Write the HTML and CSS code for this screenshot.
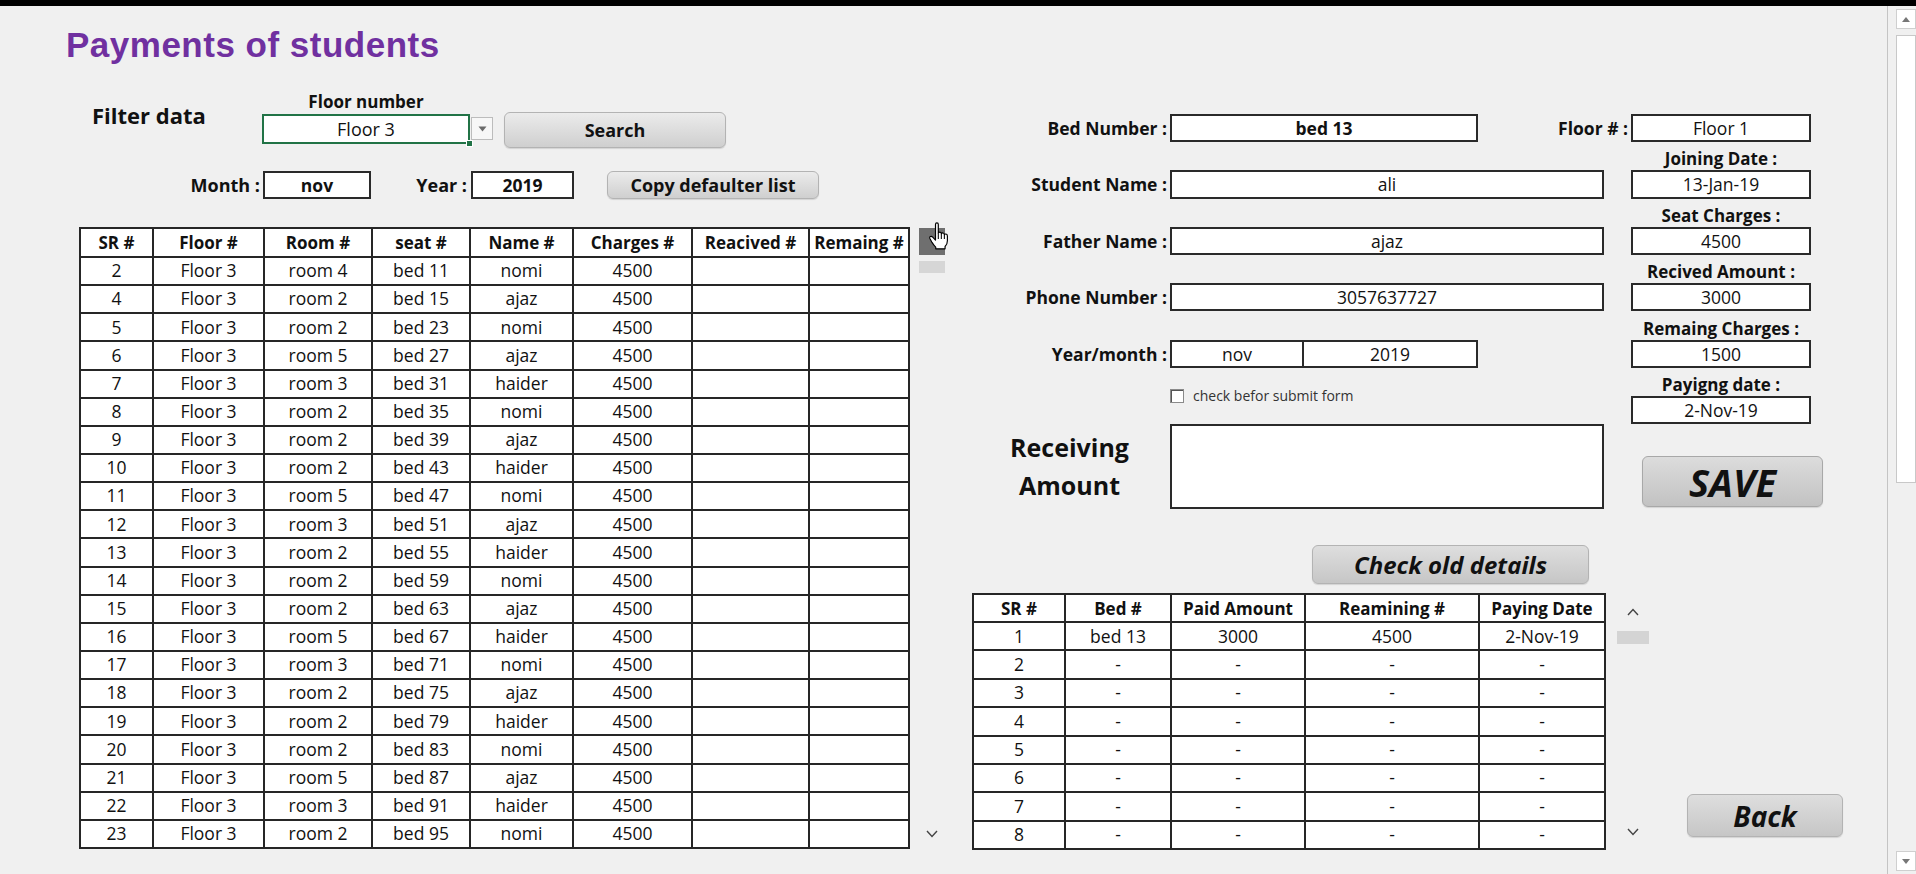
FILE: index.html
```html
<!DOCTYPE html>
<html lang="en">
<head>
<meta charset="utf-8">
<title>Payments of students</title>
<link rel="stylesheet" href="styles.css">
</head>
<body>
<div class="topbar"></div>
<div class="sheet">
  <section class="left">
    <h1 class="title">Payments of students</h1>

    <div class="filter-row">
      <div class="filter-title">Filter data</div>
      <div class="floor-group">
        <div class="floor-label">Floor number</div>
        <div class="floor-controls">
          <div class="select">Floor 3<span class="sel-handle"></span></div>
          <div class="drop-btn"><svg width="9" height="6" viewBox="0 0 9 6"><path d="M0.5 0.5 H8.5 L4.5 5.5 Z" fill="#6b6b6b"/></svg></div>
          <button class="btn btn-search">Search</button>
        </div>
      </div>
    </div>

    <div class="period-row">
      <div class="lbl lbl-month">Month :</div>
      <div class="box box-month">nov</div>
      <div class="lbl lbl-year">Year :</div>
      <div class="box box-year">2019</div>
      <button class="btn btn-copy">Copy defaulter list</button>
    </div>

    <div class="table-row">
      <table class="grid grid-main">
        <colgroup>
          <col class="c73"><col class="c111"><col class="c108"><col class="c98"><col class="c103"><col class="c119"><col class="c117"><col class="c100">
        </colgroup>
        <thead>
          <tr><th>SR #</th><th>Floor #</th><th>Room #</th><th>seat #</th><th>Name #</th><th>Charges #</th><th>Reacived #</th><th>Remaing #</th></tr>
        </thead>
        <tbody>
          <tr><td>2</td><td>Floor 3</td><td>room 4</td><td>bed 11</td><td>nomi</td><td>4500</td><td></td><td></td></tr>
          <tr><td>4</td><td>Floor 3</td><td>room 2</td><td>bed 15</td><td>ajaz</td><td>4500</td><td></td><td></td></tr>
          <tr><td>5</td><td>Floor 3</td><td>room 2</td><td>bed 23</td><td>nomi</td><td>4500</td><td></td><td></td></tr>
          <tr><td>6</td><td>Floor 3</td><td>room 5</td><td>bed 27</td><td>ajaz</td><td>4500</td><td></td><td></td></tr>
          <tr><td>7</td><td>Floor 3</td><td>room 3</td><td>bed 31</td><td>haider</td><td>4500</td><td></td><td></td></tr>
          <tr><td>8</td><td>Floor 3</td><td>room 2</td><td>bed 35</td><td>nomi</td><td>4500</td><td></td><td></td></tr>
          <tr><td>9</td><td>Floor 3</td><td>room 2</td><td>bed 39</td><td>ajaz</td><td>4500</td><td></td><td></td></tr>
          <tr><td>10</td><td>Floor 3</td><td>room 2</td><td>bed 43</td><td>haider</td><td>4500</td><td></td><td></td></tr>
          <tr><td>11</td><td>Floor 3</td><td>room 5</td><td>bed 47</td><td>nomi</td><td>4500</td><td></td><td></td></tr>
          <tr><td>12</td><td>Floor 3</td><td>room 3</td><td>bed 51</td><td>ajaz</td><td>4500</td><td></td><td></td></tr>
          <tr><td>13</td><td>Floor 3</td><td>room 2</td><td>bed 55</td><td>haider</td><td>4500</td><td></td><td></td></tr>
          <tr><td>14</td><td>Floor 3</td><td>room 2</td><td>bed 59</td><td>nomi</td><td>4500</td><td></td><td></td></tr>
          <tr><td>15</td><td>Floor 3</td><td>room 2</td><td>bed 63</td><td>ajaz</td><td>4500</td><td></td><td></td></tr>
          <tr><td>16</td><td>Floor 3</td><td>room 5</td><td>bed 67</td><td>haider</td><td>4500</td><td></td><td></td></tr>
          <tr><td>17</td><td>Floor 3</td><td>room 3</td><td>bed 71</td><td>nomi</td><td>4500</td><td></td><td></td></tr>
          <tr><td>18</td><td>Floor 3</td><td>room 2</td><td>bed 75</td><td>ajaz</td><td>4500</td><td></td><td></td></tr>
          <tr><td>19</td><td>Floor 3</td><td>room 2</td><td>bed 79</td><td>haider</td><td>4500</td><td></td><td></td></tr>
          <tr><td>20</td><td>Floor 3</td><td>room 2</td><td>bed 83</td><td>nomi</td><td>4500</td><td></td><td></td></tr>
          <tr><td>21</td><td>Floor 3</td><td>room 5</td><td>bed 87</td><td>ajaz</td><td>4500</td><td></td><td></td></tr>
          <tr><td>22</td><td>Floor 3</td><td>room 3</td><td>bed 91</td><td>haider</td><td>4500</td><td></td><td></td></tr>
          <tr><td>23</td><td>Floor 3</td><td>room 2</td><td>bed 95</td><td>nomi</td><td>4500</td><td></td><td></td></tr>
        </tbody>
      </table>
      <div class="mini-scroll">
        <div class="ms-up"></div>
        <div class="ms-thumb"></div>
        <svg class="ms-down" width="12" height="8" viewBox="0 0 12 8"><path d="M1 1 L6 6.5 L11 1" fill="none" stroke="#444" stroke-width="1.4"/></svg>
        <svg class="cursor" width="22" height="28" viewBox="0 0 18 24">
          <path d="M6 2.2 Q6 0.8 7.2 0.8 Q8.4 0.8 8.4 2.2 V9.6 Q8.6 8.6 9.8 8.7 Q11 8.8 11 10.1 Q11.2 9.3 12.4 9.4 Q13.6 9.6 13.6 10.9 Q13.8 10.2 15 10.3 Q16.2 10.5 16.2 11.9 V16 Q16.2 19 14.2 21 V23 H6.2 V21.5 Q4.5 20 3 17.5 L1.2 14.2 Q0.6 13 1.6 12.5 Q2.6 12 3.6 13 L6 15.5 Z" fill="#fff" stroke="#000" stroke-width="1" stroke-linejoin="round"/>
          <path d="M8.4 9.6 V14.5 M11 10.1 V14.5 M13.6 10.9 V14.5" stroke="#000" stroke-width="0.9" fill="none"/>
        </svg>
      </div>
    </div>
  </section>

  <section class="right">
    <div class="form">
      <div class="f-lbl row1">Bed Number :</div>
      <div class="box f-bed row1">bed 13</div>
      <div class="f-lbl floor-lbl row1">Floor # :</div>
      <div class="box side-box row1">Floor 1</div>

      <div class="side-lbl row2">Joining Date :</div>

      <div class="f-lbl row3">Student Name :</div>
      <div class="box f-wide row3">ali</div>
      <div class="box side-box row3">13-Jan-19</div>

      <div class="side-lbl row4">Seat Charges :</div>

      <div class="f-lbl row5">Father Name :</div>
      <div class="box f-wide row5">ajaz</div>
      <div class="box side-box row5">4500</div>

      <div class="side-lbl row6">Recived Amount :</div>

      <div class="f-lbl row7">Phone Number :</div>
      <div class="box f-wide row7">3057637727</div>
      <div class="box side-box row7">3000</div>

      <div class="side-lbl row8">Remaing Charges :</div>

      <div class="f-lbl row9">Year/month :</div>
      <div class="ym row9"><span class="ym-m">nov</span><span class="ym-y">2019</span></div>
      <div class="box side-box row9">1500</div>

      <div class="side-lbl row10">Payigng date :</div>
      <label class="check"><span class="check-box"></span>check befor submit form</label>
      <div class="box side-box row11">2-Nov-19</div>

      <div class="recv-lbl">Receiving<br>Amount</div>
      <div class="box recv-box"></div>
      <button class="btn btn-save">SAVE</button>
    </div>

    <div class="old-row">
      <button class="btn btn-old">Check old details</button>
    </div>

    <div class="bottom-row">
      <table class="grid grid-hist">
        <colgroup>
          <col class="c92"><col class="c106"><col class="c134"><col class="c174"><col class="c126">
        </colgroup>
        <thead>
          <tr><th>SR #</th><th>Bed #</th><th>Paid Amount</th><th>Reamining #</th><th>Paying Date</th></tr>
        </thead>
        <tbody>
          <tr><td>1</td><td>bed 13</td><td>3000</td><td>4500</td><td>2-Nov-19</td></tr>
          <tr><td>2</td><td>-</td><td>-</td><td>-</td><td>-</td></tr>
          <tr><td>3</td><td>-</td><td>-</td><td>-</td><td>-</td></tr>
          <tr><td>4</td><td>-</td><td>-</td><td>-</td><td>-</td></tr>
          <tr><td>5</td><td>-</td><td>-</td><td>-</td><td>-</td></tr>
          <tr><td>6</td><td>-</td><td>-</td><td>-</td><td>-</td></tr>
          <tr><td>7</td><td>-</td><td>-</td><td>-</td><td>-</td></tr>
          <tr><td>8</td><td>-</td><td>-</td><td>-</td><td>-</td></tr>
        </tbody>
      </table>
      <div class="hist-scroll">
        <svg class="hs-up" width="12" height="8" viewBox="0 0 12 8"><path d="M1 7 L6 1.5 L11 7" fill="none" stroke="#444" stroke-width="1.4"/></svg>
        <div class="hs-thumb"></div>
        <svg class="hs-down" width="12" height="8" viewBox="0 0 12 8"><path d="M1 1 L6 6.5 L11 1" fill="none" stroke="#444" stroke-width="1.4"/></svg>
      </div>
      <button class="btn btn-back">Back</button>
    </div>
  </section>

  <div class="vscroll">
    <div class="vs-up"><svg width="8" height="5" viewBox="0 0 8 5"><path d="M0 5 L4 0 L8 5 Z" fill="#777"/></svg></div>
    <div class="vs-thumb"></div>
    <div class="vs-down"><svg width="8" height="5" viewBox="0 0 8 5"><path d="M0 0 L8 0 L4 5 Z" fill="#777"/></svg></div>
  </div>
</div>
</body>
</html>
```

FILE: styles.css
```css
* { box-sizing: border-box; }
html, body { margin: 0; padding: 0; }
body {
  width: 1916px;
  height: 874px;
  overflow: hidden;
  background: #f0f0f0;
  font-family: "Open Sans", "Noto Sans", sans-serif;
  color: #111;
}
.topbar { height: 6px; background: #000; }
.sheet { display: flex; height: 868px; }

/* ---------- left half ---------- */
.left { flex: none; width: 972px; }
.title {
  margin: 21px 0 0 66px;
  font: bold 35px/35px "Liberation Sans", Arial, sans-serif;
  letter-spacing: 0.5px;
  color: #7030a0;
}
.filter-row { display: flex; margin-top: 30px; }
.filter-title {
  margin: 8px 0 0 92px;
  width: 170px;
  font-size: 22px;
  line-height: 30px;
  font-weight: 700;
}
.floor-group { display: flex; flex-direction: column; }
.floor-label {
  width: 208px;
  text-align: center;
  font-size: 17px;
  line-height: 20px;
  font-weight: 700;
}
.floor-controls { display: flex; height: 36px; }
.select {
  position: relative;
  width: 208px;
  height: 30px;
  margin-top: 2px;
  background: #fff;
  border: 2px solid #217346;
  display: flex;
  align-items: center;
  justify-content: center;
  font-size: 18px;
}
.sel-handle {
  position: absolute;
  right: -5px;
  bottom: -5px;
  width: 7px;
  height: 7px;
  background: #217346;
  border: 1px solid #fff;
}
.drop-btn {
  width: 22px;
  height: 23px;
  margin: 5px 0 0 1px;
  background: #f7f7f7;
  border: 1px solid #bcbcbc;
  display: flex;
  align-items: center;
  justify-content: center;
}
.btn {
  font-family: "Open Sans", "Noto Sans", sans-serif;
  font-weight: 700;
  color: #111;
  background: linear-gradient(#ebebeb, #cfcfcf);
  border: 1px solid #b3b3b3;
  border-radius: 6px;
  box-shadow: 0 1px 1px rgba(0, 0, 0, 0.12);
  padding: 0;
  display: flex;
  align-items: center;
  justify-content: center;
}
.btn-search { width: 222px; height: 36px; margin-left: 11px; font-size: 18px; }

.period-row { display: flex; height: 28px; margin-top: 23px; }
.lbl {
  display: flex;
  align-items: center;
  justify-content: flex-end;
  font-weight: 700;
  font-size: 18px;
}
.lbl-month { width: 263px; padding-right: 3px; }
.lbl-year { width: 100px; padding-right: 4px; }
.box {
  background: #fff;
  border: 2px solid #2a2a2a;
  display: flex;
  align-items: center;
  justify-content: center;
  font-size: 17.5px;
  white-space: nowrap;
}
.box-month { width: 108px; font-weight: 700; }
.box-year { width: 103px; font-weight: 700; }
.btn-copy { width: 212px; margin-left: 33px; font-size: 18px; }

.table-row { display: flex; margin-top: 28px; padding-left: 79px; }
.grid { border-collapse: collapse; table-layout: fixed; background: #fff; }
.grid th, .grid td {
  border: 2px solid #262626;
  text-align: center;
  padding: 0;
  white-space: nowrap;
  line-height: 1;
}
.grid th { font-weight: 700; font-size: 17px; }
.grid td { font-weight: 400; font-size: 17.5px; }
.grid-main { width: 829px; }
.grid-main th { height: 29px; }
.grid-main td { height: 28.15px; }
.c73 { width: 73px; } .c111 { width: 111px; } .c108 { width: 108px; } .c98 { width: 98px; }
.c103 { width: 103px; } .c119 { width: 119px; } .c117 { width: 117px; } .c100 { width: 100px; }

.mini-scroll {
  position: relative;
  width: 26px;
  margin-left: 9px;
  display: flex;
  flex-direction: column;
  align-items: center;
}
.ms-up { width: 26px; height: 27px; background: #6f6f6f; margin-top: 1px; }
.ms-thumb { width: 26px; height: 12px; background: #d6d6d6; margin-top: 6px; }
.ms-down { margin-top: auto; margin-bottom: 11px; }
.cursor { position: absolute; left: 9px; top: -5px; }

/* ---------- right half ---------- */
.right { flex: none; width: 915px; padding-top: 108px; }
.form {
  display: grid;
  grid-template-columns: 195px 3px 308px 126px 27px 180px;
  grid-template-rows: repeat(11, 28.2px) 85px;
}
.row1 { grid-row: 1; } .row2 { grid-row: 2; } .row3 { grid-row: 3; } .row4 { grid-row: 4; }
.row5 { grid-row: 5; } .row6 { grid-row: 6; } .row7 { grid-row: 7; } .row8 { grid-row: 8; }
.row9 { grid-row: 9; } .row10 { grid-row: 10; } .row11 { grid-row: 11; }
.f-lbl {
  grid-column: 1;
  display: flex;
  align-items: center;
  justify-content: flex-end;
  font-weight: 700;
  font-size: 17.5px;
  white-space: nowrap;
}
.floor-lbl { grid-column: 4 / span 2; padding-right: 3px; }
.f-bed { grid-column: 3; font-weight: 700; }
.f-wide { grid-column: 3 / span 2; }
.side-box { grid-column: 6; }
.side-lbl {
  grid-column: 6;
  align-self: end;
  text-align: center;
  font-weight: 700;
  font-size: 17px;
  line-height: 22px;
  white-space: nowrap;
}
.ym {
  grid-column: 3;
  display: flex;
  background: #fff;
  border: 2px solid #2a2a2a;
  font-size: 17.5px;
}
.ym-m { width: 132px; display: flex; align-items: center; justify-content: center; border-right: 2px solid #2a2a2a; }
.ym-y { flex: 1; display: flex; align-items: center; justify-content: center; }
.check {
  grid-column: 3 / span 2;
  grid-row: 10 / span 2;
  align-self: center;
  display: flex;
  align-items: center;
  font-size: 14px;
  color: #333;
}
.check-box {
  width: 14px;
  height: 14px;
  margin-right: 9px;
  background: #fff;
  border: 1px solid #8a8a8a;
  box-shadow: inset 1px 1px 0 #555;
}
.recv-lbl {
  grid-column: 1;
  grid-row: 12;
  padding-top: 4px;
  text-align: center;
  font-weight: 700;
  font-size: 25px;
  line-height: 38px;
}
.recv-box { grid-column: 3 / span 2; grid-row: 12; }
.btn-save {
  grid-column: 6;
  grid-row: 12;
  align-self: end;
  width: 181px;
  height: 51px;
  margin: 0 0 2px 11px;
  font-size: 38px;
  font-style: italic;
  background: linear-gradient(#dcdcdc, #c2c2c2);
  border-color: #a8a8a8;
}
.old-row { margin-top: 36px; padding-left: 340px; }
.btn-old {
  width: 277px;
  height: 39px;
  font-size: 24px;
  font-style: italic;
  background: linear-gradient(#dedede, #c6c6c6);
}
.bottom-row { display: flex; margin-top: 9px; }
.grid-hist { width: 632px; }
.grid-hist th { height: 28px; }
.grid-hist td { height: 28.4px; }
.c92 { width: 92px; } .c106 { width: 106px; } .c134 { width: 134px; } .c174 { width: 174px; } .c126 { width: 126px; }
.hist-scroll {
  width: 32px;
  margin-left: 11px;
  display: flex;
  flex-direction: column;
  align-items: center;
}
.hs-up { margin-top: 15px; }
.hs-thumb { width: 32px; height: 13px; background: #d4d4d4; margin-top: 15px; }
.hs-down { margin-top: auto; margin-bottom: 14px; }
.btn-back {
  width: 156px;
  height: 43px;
  margin: 0 0 13px 38px;
  align-self: flex-end;
  font-size: 28px;
  font-style: italic;
  background: linear-gradient(#dedede, #c6c6c6);
}

/* ---------- window scrollbar ---------- */
.vscroll {
  flex: none;
  width: 29px;
  border-left: 1px solid #c4c4c4;
  background: #f0f0f0;
  display: flex;
  flex-direction: column;
  align-items: flex-end;
}
.vs-up, .vs-down {
  width: 20px;
  height: 20px;
  background: #fff;
  border: 1px solid #cfcfcf;
  display: flex;
  align-items: center;
  justify-content: center;
}
.vs-up { margin-top: 3px; }
.vs-thumb {
  width: 20px;
  height: 448px;
  margin-top: 6px;
  background: #fff;
  border: 1px solid #c8c8c8;
}
.vs-down { margin-top: auto; margin-bottom: 3px; }
```
